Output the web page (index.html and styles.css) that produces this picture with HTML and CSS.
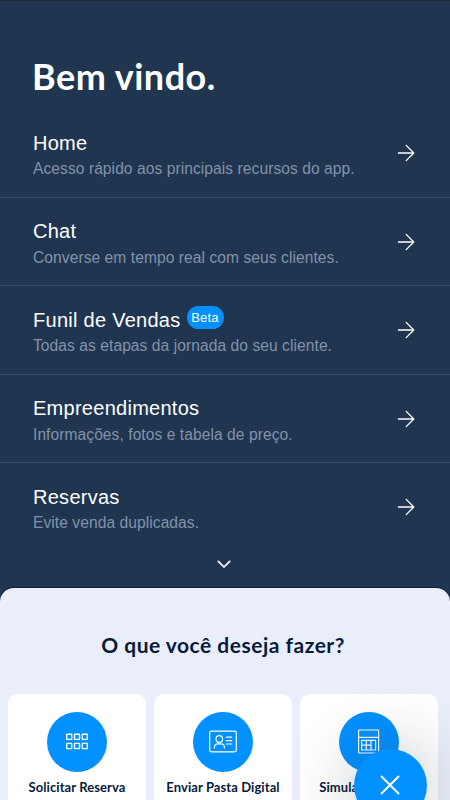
FILE: index.html
```html
<!DOCTYPE html>
<html lang="pt-BR">
<head>
    <meta charset="utf-8">
    <meta name="viewport" content="width=device-width, initial-scale=1">
    <title>Bem vindo</title>
    <link rel="stylesheet" href="styles.css">
</head>
<body>
    <div class="app">
        <main class="welcome">
            <h1>Bem vindo.</h1>
            <nav class="menu">
                <a class="item">
                    <div class="info">
                        <h2>Home</h2>
                        <p>Acesso rápido aos principais recursos do app.</p>
                    </div>
                    <svg class="arrow" viewBox="0 0 18 18"><path d="M1.4 9h15.4M9.2 1.4L16.8 9L9.2 16.6"/></svg>
                </a>
                <a class="item">
                    <div class="info">
                        <h2>Chat</h2>
                        <p>Converse em tempo real com seus clientes.</p>
                    </div>
                    <svg class="arrow" viewBox="0 0 18 18"><path d="M1.4 9h15.4M9.2 1.4L16.8 9L9.2 16.6"/></svg>
                </a>
                <a class="item">
                    <div class="info">
                        <h2>Funil de Vendas <span class="badge">Beta</span></h2>
                        <p>Todas as etapas da jornada do seu cliente.</p>
                    </div>
                    <svg class="arrow" viewBox="0 0 18 18"><path d="M1.4 9h15.4M9.2 1.4L16.8 9L9.2 16.6"/></svg>
                </a>
                <a class="item">
                    <div class="info">
                        <h2>Empreendimentos</h2>
                        <p>Informações, fotos e tabela de preço.</p>
                    </div>
                    <svg class="arrow" viewBox="0 0 18 18"><path d="M1.4 9h15.4M9.2 1.4L16.8 9L9.2 16.6"/></svg>
                </a>
                <a class="item">
                    <div class="info">
                        <h2>Reservas</h2>
                        <p>Evite venda duplicadas.</p>
                    </div>
                    <svg class="arrow" viewBox="0 0 18 18"><path d="M1.4 9h15.4M9.2 1.4L16.8 9L9.2 16.6"/></svg>
                </a>
            </nav>
            <svg class="more" viewBox="0 0 14 9"><path d="M1.3 1.3L7 7L12.7 1.3"/></svg>
        </main>

        <section class="actions">
            <h3>O que você deseja fazer?</h3>
            <div class="cards">
                <div class="card">
                    <div class="circle">
                        <svg class="icon" viewBox="0 0 60 60">
                            <g stroke-width="1.4">
                                <rect x="19.7" y="22.2" width="5" height="5.2" rx=".5"/>
                                <rect x="27.5" y="22.2" width="5" height="5.2" rx=".5"/>
                                <rect x="35.3" y="22.2" width="5" height="5.2" rx=".5"/>
                                <rect x="19.7" y="31.4" width="5" height="5.2" rx=".5"/>
                                <rect x="27.5" y="31.4" width="5" height="5.2" rx=".5"/>
                                <rect x="35.3" y="31.4" width="5" height="5.2" rx=".5"/>
                            </g>
                        </svg>
                    </div>
                    <span>Solicitar Reserva</span>
                </div>
                <div class="card">
                    <div class="circle">
                        <svg class="icon" viewBox="0 0 60 60">
                            <rect x="16.7" y="19.2" width="26.6" height="20.6" rx="1.8"/>
                            <circle cx="26.3" cy="27" r="3.3"/>
                            <path d="M21.4 36v-.8a3.4 3.4 0 0 1 3.4-3.4h3.2a3.4 3.4 0 0 1 3.4 3.4v.8M33.3 25.2h5.4M33.3 28.6h5.4M33.3 32h5.4"/>
                        </svg>
                    </div>
                    <span>Enviar Pasta Digital</span>
                </div>
                <div class="card">
                    <div class="circle">
                        <svg class="icon" viewBox="0 0 60 60">
                            <rect x="19.6" y="18" width="20" height="23" rx=".7"/>
                            <path d="M19.6 25.4h20M22.6 28.4h14v9.6h-14zM22.6 33.2h9.4M27.3 28.4v9.6M32 28.4v9.6"/>
                        </svg>
                    </div>
                    <span>Simular Proposta</span>
                </div>
            </div>
        </section>

        <button class="close" aria-label="Fechar">
            <svg viewBox="0 0 20 20"><path d="M1.5 1.5l17 17M18.5 1.5l-17 17"/></svg>
        </button>
    </div>
</body>
</html>
```
FILE: styles.css
```css
* {
    box-sizing: border-box;
}

body {
    margin: 0;
    background: #1b2d46;
    font-family: "Liberation Sans", Arial, sans-serif;
}

h1, h2, h3, p {
    margin: 0;
}

svg {
    fill: none;
    stroke: #fff;
    stroke-linecap: round;
    stroke-linejoin: round;
}

.app {
    position: relative;
    height: 800px;
    overflow: hidden;
    display: flex;
    flex-direction: column;
    background: #20354f;
    border-top: 1px solid #20293b;
}

.welcome {
    height: 587px;
    flex-shrink: 0;
    padding-top: 52px;
    display: flex;
    flex-direction: column;
}

h1 {
    height: 56.7px;
    padding-left: 32px;
    font: 700 36px/46px Lato, sans-serif;
    letter-spacing: 0.5px;
    color: #fff;
}

.item {
    height: 88.4px;
    padding: 0 35px 0 33px;
    display: flex;
    align-items: center;
    justify-content: space-between;
    border-bottom: 1px solid #374c68;
}

.item:last-child {
    border-bottom: none;
}

.info {
    padding-top: 6px;
}

h2 {
    display: flex;
    align-items: center;
    gap: 6px;
    height: 26px;
    font-size: 20px;
    font-weight: 400;
    letter-spacing: 0.27px;
    color: #fff;
}

.item p {
    height: 26px;
    font-size: 15.6px;
    line-height: 26px;
    letter-spacing: 0.06px;
    color: #8093ab;
    white-space: nowrap;
}

.badge {
    height: 23px;
    width: 37px;
    margin-top: -6px;
    border-radius: 12px;
    background: #0391ff;
    font-size: 13px;
    line-height: 24px;
    letter-spacing: 0.2px;
    text-align: center;
}

.arrow {
    width: 18px;
    height: 18px;
    stroke-width: 1.3;
}

.more {
    width: 14px;
    height: 9px;
    margin: 8px 0 0 216.5px;
    stroke-width: 1.7;
}

.actions {
    height: 260px;
    flex-shrink: 0;
    border-radius: 14px 14px 0 0;
    background: #eaeefa;
    box-shadow: 0 -1px 0 #0c1c3a;
    color: #071b3b;
    font-family: Lato, sans-serif;
}

h3 {
    padding-top: 43px;
    height: 106px;
    padding-right: 4px;
    font-size: 21px;
    font-weight: 700;
    line-height: 28px;
    letter-spacing: 0.5px;
    text-align: center;
}

.cards {
    display: flex;
    gap: 8px;
    padding-left: 8px;
}

.card {
    width: 138px;
    height: 150px;
    flex-shrink: 0;
    padding-top: 18px;
    border-radius: 10px;
    background: #fff;
    display: flex;
    flex-direction: column;
    align-items: center;
    font-size: 13px;
    font-weight: 700;
    letter-spacing: 0.08px;
    white-space: nowrap;
}

.card span {
    margin-top: 6px;
    line-height: 18px;
}

.circle {
    width: 60px;
    height: 60px;
    border-radius: 50%;
    background: #0391ff;
}

.icon {
    display: block;
    width: 60px;
    height: 60px;
    stroke-width: 1.2;
}

.close {
    position: absolute;
    left: 354px;
    top: 748px;
    width: 73px;
    height: 73px;
    padding: 0 1px 2px 0;
    border: none;
    border-radius: 50%;
    background: #0391ff;
    box-shadow: 0 0 60px 10px rgba(30, 40, 60, 0.2);
    display: flex;
    align-items: center;
    justify-content: center;
}

.close svg {
    width: 20px;
    height: 20px;
    stroke-width: 1.9;
}
```
